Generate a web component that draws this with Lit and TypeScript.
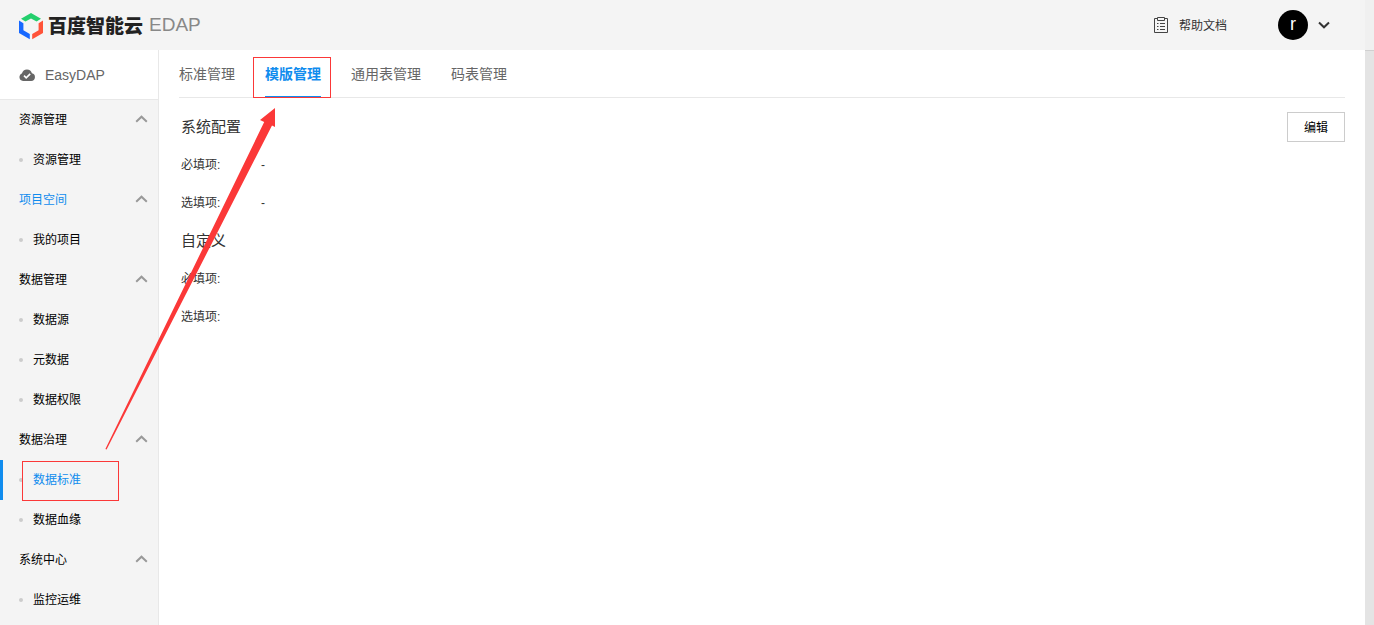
import { LitElement, html, css, svg } from "lit";
import { customElement, state } from "lit/decorators.js";
import { classMap } from "lit/directives/class-map.js";

interface Group {
  title: string;
  current?: boolean;
  items: string[];
}

const GROUPS: Group[] = [
  { title: "资源管理", items: ["资源管理"] },
  { title: "项目空间", current: true, items: ["我的项目"] },
  { title: "数据管理", items: ["数据源", "元数据", "数据权限"] },
  { title: "数据治理", items: ["数据标准", "数据血缘"] },
  { title: "系统中心", items: ["监控运维"] },
];

const TABS = ["标准管理", "模版管理", "通用表管理", "码表管理"];

const SECTIONS = [
  { title: "系统配置", rows: [["必填项", "-"], ["选填项", "-"]] },
  { title: "自定义", rows: [["必填项", ""], ["选填项", ""]] },
];

const base = css`
  * {
    box-sizing: border-box;
  }
  button {
    margin: 0;
    padding: 0;
    border: 0;
    background: none;
    font: inherit;
    color: inherit;
    cursor: pointer;
  }
  a {
    color: inherit;
    text-decoration: none;
  }
  svg {
    display: block;
    flex: none;
  }
`;

@customElement("app-header")
export class AppHeader extends LitElement {
  static styles = [
    base,
    css`
      :host {
        display: flex;
        align-items: center;
        height: 50px;
        padding: 0 35px 0 18px;
        background: #f4f4f4;
      }
      .brand {
        display: flex;
        align-items: center;
        flex: 1;
        padding-top: 4px;
      }
      .name {
        margin-left: 4px;
        font-size: 19px;
        font-weight: 900;
        line-height: 24px;
        color: #222;
      }
      .product {
        margin-left: 6px;
        font-size: 19px;
        line-height: 24px;
        padding-bottom: 4px;
        color: #888;
      }
      .help {
        display: flex;
        align-items: center;
        gap: 10px;
        color: #333;
        font-size: 12px;
      }
      .help-text {
        padding-bottom: 2px;
      }
      .user {
        display: flex;
        align-items: center;
        gap: 10px;
        margin-left: 51px;
      }
      .avatar {
        width: 30px;
        height: 30px;
        border-radius: 50%;
        background: #000;
        color: #fff;
        font-size: 18px;
        line-height: 28px;
        text-align: center;
      }
    `,
  ];

  render() {
    return html`
      <a class="brand" href="#">
        <svg width="26" height="28" viewBox="0 0 26 28" aria-hidden="true">
          <path fill="#24cf6d" d="M13 0 23 5.8 18.6 8.6 13 5.4 7.4 8.6 3 5.8Z" />
          <path fill="#1768ff" d="M1 7.6 5.4 10.2V17.2L11.8 21V26.2L1 20Z" />
          <path fill="#ff5339" d="M25 7.6 20.6 10.2V17.2L14.2 21V26.2L25 20Z" />
        </svg>
        <span class="name">百度智能云</span>
        <span class="product">EDAP</span>
      </a>
      <a class="help" href="#">
        <svg width="16" height="18" viewBox="0 0 16 18" fill="none" stroke="#444" aria-hidden="true">
          <path d="M4.5 2.5H1.5V16.5H14.5V2.5H11.5" />
          <path d="M4.5 1.5H11.5V4.5H4.5Z" />
          <path d="M4 7.5H5.5M7 7.5H12M4 10.5H5.5M7 10.5H12M4 13.5H5.5M7 13.5H12" />
        </svg>
        <span class="help-text">帮助文档</span>
      </a>
      <button class="user" aria-label="账户">
        <span class="avatar">r</span>
        <svg width="12" height="8" viewBox="0 0 12 8" fill="none" stroke="#333" stroke-width="2" aria-hidden="true">
          <path d="M1 1.5 6 6.3 11 1.5" />
        </svg>
      </button>
    `;
  }
}

@customElement("app-sidebar")
export class AppSidebar extends LitElement {
  static styles = [
    base,
    css`
      :host {
        display: block;
        overflow: hidden;
        border-right: 1px solid #e8e8e8;
        background: #f4f4f4;
        color: #000;
        font-size: 12px;
      }
      .title {
        display: flex;
        align-items: center;
        gap: 10px;
        height: 50px;
        padding-left: 19px;
        border-bottom: 1px solid #e8e8e8;
        background: #fff;
        color: #666;
        font-size: 14px;
      }
      .group,
      .item {
        display: flex;
        align-items: center;
        width: 100%;
        height: 40px;
      }
      .group {
        justify-content: space-between;
        padding: 0 10px 0 19px;
      }
      .label {
        padding-bottom: 4px;
      }
      .chevron {
        margin-bottom: 2px;
      }
      .current,
      .active {
        color: #108cee;
      }
      .item {
        position: relative;
        gap: 10px;
        padding-left: 16px;
        border-left: 3px solid transparent;
      }
      .item::before {
        content: "";
        width: 4px;
        height: 4px;
        border-radius: 50%;
        background: #ccc;
      }
      .active {
        border-left-color: #108cee;
      }
      .mark {
        position: absolute;
        inset: 1px 39px -1px 19px;
        border: 1px solid #fb3838;
      }
    `,
  ];

  @state() private active = "数据标准";

  render() {
    return html`
      <div class="title">
        <svg width="16" height="12" viewBox="0 0 16 12" aria-hidden="true">
          <path
            fill="#666"
            d="M4 12A4 4 0 0 1 3 4.3 5.1 5.1 0 0 1 12.9 4.3 3.9 3.9 0 0 1 12.2 12Z"
          />
          <path fill="none" stroke="#fff" stroke-width="1.6" d="M5 6.6 7.2 8.8 11.2 4.9" />
        </svg>
        EasyDAP
      </div>
      <nav>
        ${GROUPS.map(
          (g) => html`
            <button class=${classMap({ group: true, current: !!g.current })} aria-expanded="true">
              <span class="label">${g.title}</span>
              <svg
                class="chevron"
                width="13"
                height="8"
                viewBox="0 0 13 8"
                fill="none"
                stroke="#999"
                stroke-width="2"
                aria-hidden="true"
              >
                <path d="M1.2 6.8 6.5 1.7 11.8 6.8" />
              </svg>
            </button>
            ${g.items.map(
              (name) => html`
                <a
                  class=${classMap({ item: true, active: name === this.active })}
                  href="#"
                  @click=${() => (this.active = name)}
                >
                  <span class="label">${name}</span>
                  ${name === "数据标准" ? html`<span class="mark"></span>` : null}
                </a>
              `
            )}
          `
        )}
      </nav>
    `;
  }
}

@customElement("template-page")
export class TemplatePage extends LitElement {
  static styles = [
    base,
    css`
      :host {
        display: block;
        padding: 0 20px;
        background: #fff;
        color: #333;
      }
      .tabs {
        display: flex;
        gap: 30px;
        height: 48px;
        border-bottom: 1px solid #e8e8e8;
      }
      .tab {
        position: relative;
        height: 48px;
        border-bottom: 2px solid transparent;
        color: #666;
        font-size: 14px;
      }
      .selected {
        border-bottom-color: #108cee;
        color: #108cee;
        font-weight: 700;
      }
      .mark {
        position: absolute;
        inset: 7px -10px -2px -12px;
        border: 1px solid #fb3838;
      }
      .content {
        display: flex;
        justify-content: space-between;
        align-items: flex-start;
        padding: 10px 0 0 2px;
      }
      h2 {
        margin: 0;
        font-size: 15px;
        font-weight: 400;
        line-height: 38px;
      }
      dl {
        display: grid;
        grid-template-columns: 80px 1fr;
        margin: 0;
        font-size: 12px;
        line-height: 38px;
      }
      dt,
      dd {
        margin: 0;
        min-height: 38px;
      }
      .edit {
        width: 58px;
        height: 30px;
        margin-top: 4px;
        padding-bottom: 2px;
        border: 1px solid #ccc;
        background: #fff;
        color: #000;
        font-size: 12px;
      }
    `,
  ];

  @state() private tab = 1;

  render() {
    return html`
      <div class="tabs" role="tablist">
        ${TABS.map(
          (t, i) => html`
            <button
              class=${classMap({ tab: true, selected: i === this.tab })}
              role="tab"
              aria-selected=${i === this.tab}
              @click=${() => (this.tab = i)}
            >
              ${t}${i === 1 ? html`<span class="mark"></span>` : null}
            </button>
          `
        )}
      </div>
      <div class="content">
        <div>
          ${SECTIONS.map(
            (s) => html`
              <h2>${s.title}</h2>
              <dl>
                ${s.rows.map(([k, v]) => html`<dt>${k}:</dt><dd>${v}</dd>`)}
              </dl>
            `
          )}
        </div>
        <button class="edit">编辑</button>
      </div>
    `;
  }
}

@customElement("app-root")
export class AppRoot extends LitElement {
  static styles = [
    base,
    css`
      :host {
        position: relative;
        display: grid;
        grid-template: 50px 1fr / 159px 1fr 9px;
        height: 100vh;
        overflow: hidden;
        font-family: "Liberation Sans", "Noto Sans CJK SC", sans-serif;
      }
      app-header {
        grid-column: 1 / 3;
      }
      .thumb {
        background: #f0f0f0;
      }
      .track {
        border-top: 1px solid #d0d0d0;
        background: #e4e4e4;
      }
      .arrow {
        position: absolute;
        top: 108px;
        left: 105px;
        pointer-events: none;
      }
    `,
  ];

  render() {
    return html`
      <app-header></app-header>
      <div class="thumb"></div>
      <app-sidebar></app-sidebar>
      <template-page></template-page>
      <div class="track"></div>
      <svg class="arrow" width="171" height="342" viewBox="0 0 171 342" aria-hidden="true">
        ${svg`<path fill="#fb3838" d="M0.4 341 159.2 14 155 12 170 0V19L167 17.5 1.6 341.6Z" />`}
      </svg>
    `;
  }
}
